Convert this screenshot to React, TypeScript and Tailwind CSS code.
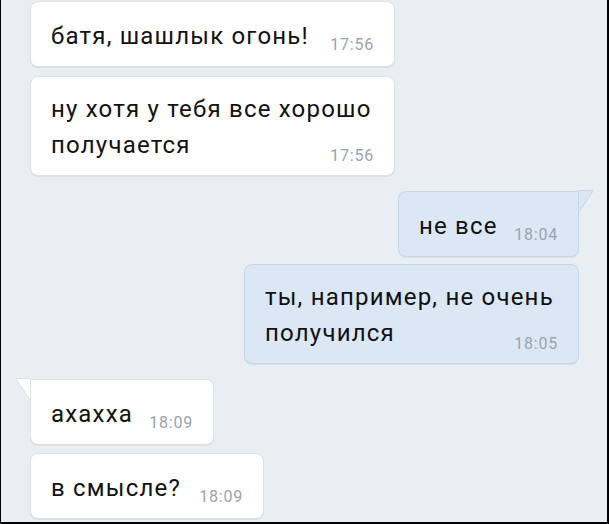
import React from 'react';

type Msg = {
  lines: string[];
  time: string;
  out?: boolean;
  width: string;
  tail?: boolean;
  gapTop: string;
};

const messages: Msg[] = [
  { lines: ['батя, шашлык огонь!'], time: '17:56', width: 'w-[365px]', gapTop: 'mt-[1px]' },
  { lines: ['ну хотя у тебя все хорошо', 'получается'], time: '17:56', width: 'w-[365px]', gapTop: 'mt-[9px]' },
  { lines: ['не все'], time: '18:04', out: true, width: 'w-[181px]', tail: true, gapTop: 'mt-[15px]' },
  { lines: ['ты, например, не очень', 'получился'], time: '18:05', out: true, width: 'w-[335px]', gapTop: 'mt-[7px]' },
  { lines: ['ахахха'], time: '18:09', width: 'w-[184px]', tail: true, gapTop: 'mt-[15px]' },
  { lines: ['в смысле?'], time: '18:09', width: 'w-[234px]', gapTop: 'mt-[8px]' },
];

const Bubble: React.FC<{ m: Msg }> = ({ m }) => {
  const tone = m.out
    ? 'bg-[#dbe7f5] border-[#c6d6e9]'
    : 'bg-white border-[#dbe1e7]';
  const corners = m.tail ? (m.out ? 'rounded-lg rounded-tr-none' : 'rounded-lg rounded-tl-none') : 'rounded-lg';
  const multi = m.lines.length > 1;
  const head = m.lines.slice(0, -1);
  const last = m.lines[m.lines.length - 1];

  return (
    <div className={`relative shrink-0 ${m.width} ${m.gapTop} ${m.out ? 'self-end mr-[28px]' : 'ml-[29px]'}`}>
      {m.tail && (
        <svg
          width="18"
          height="25"
          viewBox="0 0 18 25"
          className={`absolute -top-px ${m.out ? '-right-[16px]' : '-left-[16px] -scale-x-100'}`}
        >
          <path d="M0 1 H16 L1 23 Z" fill={m.out ? '#dbe7f5' : '#ffffff'} />
          <path d="M0.5 0.5 H16.5 L1.5 22.5" fill="none" stroke={m.out ? '#c6d6e9' : '#dbe1e7'} strokeWidth="1" />
        </svg>
      )}
      <div
        className={`relative border ${tone} ${corners} shadow-[0_1px_0_rgba(0,0,0,0.06)] pl-[20px] pr-[20px] ${
          multi ? 'pt-[14px] pb-[12px]' : 'pt-[16px] pb-[12px]'
        }`}
      >
        {head.map((line) => (
          <p key={line} className="text-[24px] leading-[36px] tracking-[1.2px] text-[#111] whitespace-nowrap">
            {line}
          </p>
        ))}
        <div className="flex items-baseline">
          <span className="text-[24px] leading-[36px] tracking-[1.2px] text-[#111] whitespace-nowrap">{last}</span>
          <span
            className={`ml-auto pl-[14px] text-[16px] leading-[20px] tracking-[0.8px] text-[#9aa3ad] ${
              multi ? 'translate-y-[8px]' : 'translate-y-[6px]'
            }`}
          >
            {m.time}
          </span>
        </div>
      </div>
    </div>
  );
};

export default function App() {
  return (
    <div
      className="w-[609px] h-[524px] overflow-hidden bg-[#e9eef2] border-l border-r-2 border-b-2 border-black flex flex-col"
      style={{ fontFamily: 'Roboto, "Noto Sans", sans-serif' }}
    >
      {messages.map((m, i) => (
        <Bubble key={i} m={m} />
      ))}
    </div>
  );
}
